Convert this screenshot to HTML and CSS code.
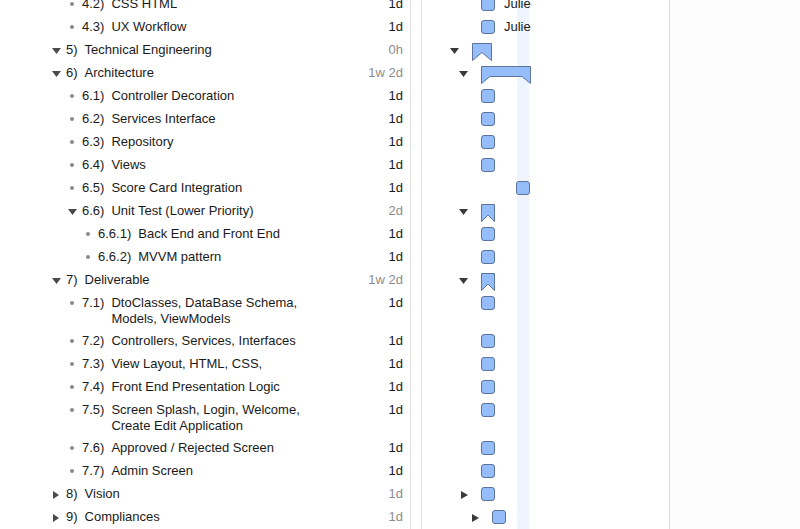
FILE: index.html
```html
<!DOCTYPE html>
<html lang="en">
<head>
<meta charset="utf-8">
<title>Project outline</title>
<link rel="stylesheet" href="styles.css">
</head>
<body>
<div class="app">
  <div class="outline">
    <div class="row l2"><span class="mark"><i class="dot"></i></span><span class="num">4.2)</span><span class="title">CSS HTML</span><span class="dur">1d</span></div>
    <div class="row l2"><span class="mark"><i class="dot"></i></span><span class="num">4.3)</span><span class="title">UX Workflow</span><span class="dur">1d</span></div>
    <div class="row l1"><span class="mark"><svg class="down" width="9" height="6" viewBox="0 0 9 6"><polygon points="0,0 9,0 4.5,6"/></svg></span><span class="num">5)</span><span class="title">Technical Engineering</span><span class="dur group">0h</span></div>
    <div class="row l1"><span class="mark"><svg class="down" width="9" height="6" viewBox="0 0 9 6"><polygon points="0,0 9,0 4.5,6"/></svg></span><span class="num">6)</span><span class="title">Architecture</span><span class="dur group">1w 2d</span></div>
    <div class="row l2"><span class="mark"><i class="dot"></i></span><span class="num">6.1)</span><span class="title">Controller Decoration</span><span class="dur">1d</span></div>
    <div class="row l2"><span class="mark"><i class="dot"></i></span><span class="num">6.2)</span><span class="title">Services Interface</span><span class="dur">1d</span></div>
    <div class="row l2"><span class="mark"><i class="dot"></i></span><span class="num">6.3)</span><span class="title">Repository</span><span class="dur">1d</span></div>
    <div class="row l2"><span class="mark"><i class="dot"></i></span><span class="num">6.4)</span><span class="title">Views</span><span class="dur">1d</span></div>
    <div class="row l2"><span class="mark"><i class="dot"></i></span><span class="num">6.5)</span><span class="title">Score Card Integration</span><span class="dur">1d</span></div>
    <div class="row l2"><span class="mark"><svg class="down" width="9" height="6" viewBox="0 0 9 6"><polygon points="0,0 9,0 4.5,6"/></svg></span><span class="num">6.6)</span><span class="title">Unit Test (Lower Priority)</span><span class="dur group">2d</span></div>
    <div class="row l3"><span class="mark"><i class="dot"></i></span><span class="num">6.6.1)</span><span class="title">Back End and Front End</span><span class="dur">1d</span></div>
    <div class="row l3"><span class="mark"><i class="dot"></i></span><span class="num">6.6.2)</span><span class="title">MVVM pattern</span><span class="dur">1d</span></div>
    <div class="row l1"><span class="mark"><svg class="down" width="9" height="6" viewBox="0 0 9 6"><polygon points="0,0 9,0 4.5,6"/></svg></span><span class="num">7)</span><span class="title">Deliverable</span><span class="dur group">1w 2d</span></div>
    <div class="row l2 two"><span class="mark"><i class="dot"></i></span><span class="num">7.1)</span><span class="title">DtoClasses, DataBase Schema, Models, ViewModels</span><span class="dur">1d</span></div>
    <div class="row l2"><span class="mark"><i class="dot"></i></span><span class="num">7.2)</span><span class="title">Controllers, Services, Interfaces</span><span class="dur">1d</span></div>
    <div class="row l2"><span class="mark"><i class="dot"></i></span><span class="num">7.3)</span><span class="title">View Layout, HTML, CSS,</span><span class="dur">1d</span></div>
    <div class="row l2"><span class="mark"><i class="dot"></i></span><span class="num">7.4)</span><span class="title">Front End Presentation Logic</span><span class="dur">1d</span></div>
    <div class="row l2 two"><span class="mark"><i class="dot"></i></span><span class="num">7.5)</span><span class="title">Screen Splash, Login, Welcome, Create Edit Application</span><span class="dur">1d</span></div>
    <div class="row l2"><span class="mark"><i class="dot"></i></span><span class="num">7.6)</span><span class="title">Approved / Rejected Screen</span><span class="dur">1d</span></div>
    <div class="row l2"><span class="mark"><i class="dot"></i></span><span class="num">7.7)</span><span class="title">Admin Screen</span><span class="dur">1d</span></div>
    <div class="row l1"><span class="mark"><svg class="right" width="6" height="8" viewBox="0 0 6 8"><polygon points="0,0 6,4 0,8"/></svg></span><span class="num">8)</span><span class="title">Vision</span><span class="dur group">1d</span></div>
    <div class="row l1"><span class="mark"><svg class="right" width="6" height="8" viewBox="0 0 6 8"><polygon points="0,0 6,4 0,8"/></svg></span><span class="num">9)</span><span class="title">Compliances</span><span class="dur group">1d</span></div>
  </div>

  <div class="splitter"></div>

  <div class="chart">
    <div class="grow"><span class="task" style="left:59px"></span><span class="res" style="left:82px">Julie</span></div>
    <div class="grow"><span class="task" style="left:59px"></span><span class="res" style="left:82px">Julie</span></div>
    <div class="grow">
      <svg class="ctri down" style="left:28px" width="9" height="6" viewBox="0 0 9 6"><polygon points="0,0 9,0 4.5,6"/></svg>
      <svg class="gbar" style="left:50px" width="20" height="18" viewBox="0 0 20 18"><path d="M0.5 0.5H19.5V17.5L10 9.5L0.5 17.5Z"/></svg>
    </div>
    <div class="grow">
      <svg class="ctri down" style="left:37px" width="9" height="6" viewBox="0 0 9 6"><polygon points="0,0 9,0 4.5,6"/></svg>
      <svg class="gbar" style="left:59px" width="50" height="18" viewBox="0 0 50 18"><path d="M0.5 0.5H49.5V17.5L41 10.5H9L0.5 17.5Z"/></svg>
    </div>
    <div class="grow"><span class="task" style="left:59px"></span></div>
    <div class="grow"><span class="task" style="left:59px"></span></div>
    <div class="grow"><span class="task" style="left:59px"></span></div>
    <div class="grow"><span class="task" style="left:59px"></span></div>
    <div class="grow"><span class="task" style="left:94px"></span></div>
    <div class="grow">
      <svg class="ctri down" style="left:37px" width="9" height="6" viewBox="0 0 9 6"><polygon points="0,0 9,0 4.5,6"/></svg>
      <svg class="gbar" style="left:59px" width="14" height="18" viewBox="0 0 14 18"><path d="M0.5 0.5H13.5V17.5L7 11L0.5 17.5Z"/></svg>
    </div>
    <div class="grow"><span class="task" style="left:59px"></span></div>
    <div class="grow"><span class="task" style="left:59px"></span></div>
    <div class="grow">
      <svg class="ctri down" style="left:37px" width="9" height="6" viewBox="0 0 9 6"><polygon points="0,0 9,0 4.5,6"/></svg>
      <svg class="gbar" style="left:59px" width="14" height="18" viewBox="0 0 14 18"><path d="M0.5 0.5H13.5V17.5L7 11L0.5 17.5Z"/></svg>
    </div>
    <div class="grow two"><span class="task" style="left:59px"></span></div>
    <div class="grow"><span class="task" style="left:59px"></span></div>
    <div class="grow"><span class="task" style="left:59px"></span></div>
    <div class="grow"><span class="task" style="left:59px"></span></div>
    <div class="grow two"><span class="task" style="left:59px"></span></div>
    <div class="grow"><span class="task" style="left:59px"></span></div>
    <div class="grow"><span class="task" style="left:59px"></span></div>
    <div class="grow">
      <svg class="ctri right" style="left:39px" width="7" height="8" viewBox="0 0 7 8"><polygon points="0,0 7,4 0,8"/></svg>
      <span class="task" style="left:59px"></span>
    </div>
    <div class="grow">
      <svg class="ctri right" style="left:50px" width="7" height="8" viewBox="0 0 7 8"><polygon points="0,0 7,4 0,8"/></svg>
      <span class="task" style="left:70px"></span>
    </div>
  </div>

  <div class="rest"></div>
</div>
</body>
</html>
```

FILE: styles.css
```css
html, body {
  margin: 0;
  padding: 0;
  background: #ffffff;
  overflow: hidden;
}

body {
  font-family: "Liberation Sans", Arial, sans-serif;
  font-size: 13px;
  color: #1a1a1a;
}

.app {
  display: flex;
  margin-top: -9px;
  min-height: 560px;
}

/* ---------- outline (left) ---------- */
.outline {
  width: 410px;
  border-right: 1px solid #e2e2e2;
  flex: none;
}

.row {
  display: flex;
  align-items: flex-start;
  height: 23px;
  box-sizing: border-box;
  padding: 5px 7px 0 48px;
  line-height: 16px;
}

.row.l2 { padding-left: 64px; }
.row.l3 { padding-left: 80px; }
.row.two { height: 38px; }

.mark {
  flex: none;
  width: 16px;
  height: 16px;
  margin-right: 2px;
  display: flex;
  align-items: center;
  justify-content: center;
}

.mark .down { margin-top: 1px; fill: #4a4a4a; }
.mark .right { margin-top: 1px; fill: #4a4a4a; }

.dot {
  display: block;
  width: 4px;
  height: 4px;
  border-radius: 50%;
  background: #8a8a8a;
}

.num {
  flex: none;
  margin-right: 7px;
}

.title {
  flex: 1;
  min-width: 0;
}

.dur {
  flex: none;
  width: 88px;
  text-align: right;
  color: #1a1a1a;
}

.dur.group { color: #8c8c8c; }

/* ---------- splitter ---------- */
.splitter {
  flex: none;
  width: 10px;
  border-right: 1px solid #e2e2e2;
  background: #ffffff;
}

/* ---------- chart ---------- */
.chart {
  flex: none;
  width: 247px;
  border-right: 1px solid #dcdcdc;
  background: linear-gradient(to right, #ffffff 95px, #eff5fe 95px, #eff5fe 107px, #ffffff 107px);
}

.grow {
  position: relative;
  height: 23px;
}

.grow.two { height: 38px; }

.task {
  position: absolute;
  top: 6px;
  width: 14px;
  height: 14px;
  box-sizing: border-box;
  border: 1px solid #5b749b;
  border-radius: 3px;
  background: #95bdfa;
}

.gbar {
  position: absolute;
  top: 6px;
  fill: #95bdfa;
  stroke: #5b749b;
  stroke-width: 1;
}

.ctri {
  position: absolute;
  fill: #3a3a3a;
}

.ctri.down { top: 11px; }
.ctri.right { top: 10px; }

.res {
  position: absolute;
  top: 5px;
  line-height: 16px;
  color: #1a1a1a;
}

.rest {
  flex: 1;
  background: #fcfcfc;
}
```
